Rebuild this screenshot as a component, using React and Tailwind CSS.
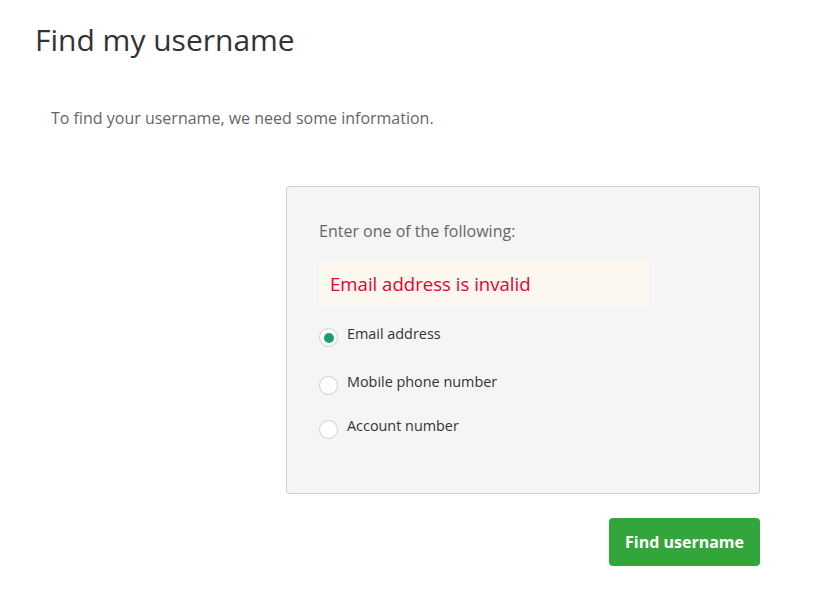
export default function App() {
  const options = [
    { label: 'Email address', checked: true },
    { label: 'Mobile phone number', checked: false },
    { label: 'Account number', checked: false },
  ]

  return (
    <div className="min-h-[592px] bg-white text-[#333] font-['Open_Sans',sans-serif]">
      <div className="pl-[35px] pt-[20px]">
        <h1 className="text-[30px] leading-[40px] font-normal text-[#333]">Find my username</h1>
        <p className="mt-[48px] ml-[16px] text-[16px] leading-[20px] text-[#666]">
          To find your username, we need some information.
        </p>
      </div>

      <div className="ml-[286px] mt-[58px] w-[474px]">
        {/* form box */}
        <div className="h-[308px] bg-[#f5f5f5] border border-[#d0d0d0] rounded-[3px] pt-[33px] px-[32px]">
          <p className="text-[16px] leading-[22px] text-[#666]">Enter one of the following:</p>

          <div className="mt-[19px] w-[330px] h-[45px] bg-[#fcf8f0] flex items-center px-[11px]">
            <span className="text-[18.6px] text-[#e8002f]">Email address is invalid</span>
          </div>

          <div className="mt-[16px] flex flex-col">
            {options.map((o, i) => (
              <label
                key={o.label}
                className={`flex items-start gap-[9px] ${i === 0 ? '' : i === 1 ? 'mt-[23px]' : 'mt-[19px]'}`}
              >
                <span className="mt-[6px] w-[19px] h-[19px] rounded-full bg-white border border-[#cfcfcf] flex items-center justify-center shrink-0">
                  {o.checked && <span className="w-[10px] h-[10px] rounded-full bg-[#1f9b6f]" />}
                </span>
                <span className="text-[14.4px] leading-[24px] text-[#333]">{o.label}</span>
              </label>
            ))}
          </div>
        </div>

        <div className="flex justify-end mt-[24px]">
          <button className="w-[151px] h-[48px] rounded-[4px] bg-[#33a63b] text-white text-[16px] font-bold">
            Find username
          </button>
        </div>
      </div>
    </div>
  )
}
